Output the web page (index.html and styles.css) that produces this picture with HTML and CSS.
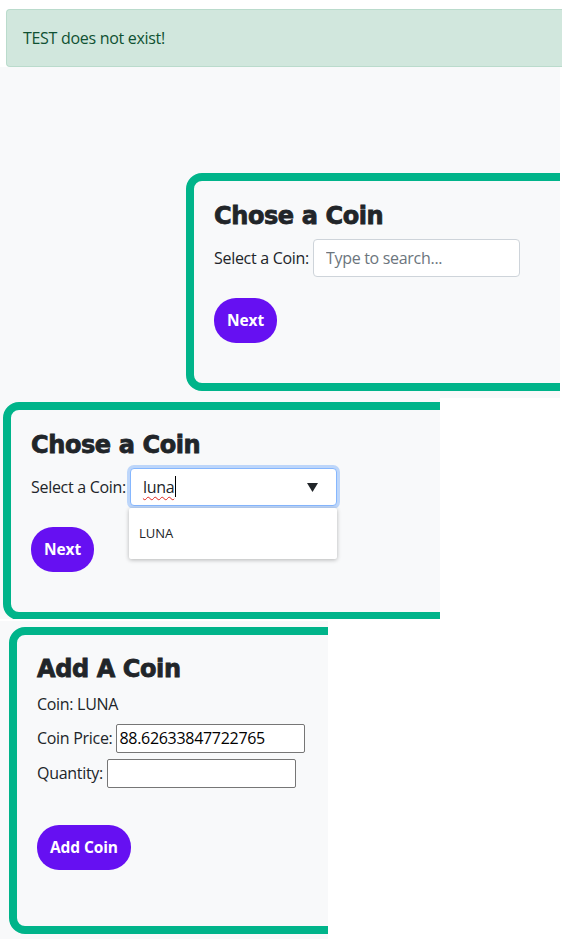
FILE: index.html
```html
<!DOCTYPE html>
<html lang="en">
<head>
<meta charset="utf-8">
<title>Coins</title>
<link rel="stylesheet" href="styles.css">
</head>
<body>
<div class="page">
  <section class="shot shot-1">
    <div class="alert-wrap">
      <div class="alert">TEST does not exist!</div>
    </div>
    <div class="shot-1-body">
      <div class="card card-1">
        <h2 class="card-title">Chose a Coin</h2>
        <div class="field-row">
          <label class="field-label">Select a Coin:</label>
          <input class="search-input" type="text" placeholder="Type to search...">
        </div>
        <button class="btn" type="button">Next</button>
      </div>
    </div>
  </section>

  <section class="shot shot-2">
    <div class="card card-2">
      <h2 class="card-title">Chose a Coin</h2>
      <div class="field-row">
        <label class="field-label">Select a Coin:</label>
        <div class="combo-wrap">
          <div class="combo">
            <span class="typed">luna</span><span class="caret"></span>
            <svg class="combo-arrow" width="11" height="9" viewBox="0 0 11 9"><path d="M0 0H11L5.5 9Z" fill="#212529"/></svg>
          </div>
          <div class="menu">
            <div class="menu-item">LUNA</div>
          </div>
        </div>
      </div>
      <button class="btn" type="button">Next</button>
    </div>
  </section>

  <section class="shot shot-3">
    <div class="card card-3">
      <h2 class="card-title">Add A Coin</h2>
      <p class="coin-line">Coin: LUNA</p>
      <div class="inline-row">
        <label class="field-label">Coin Price:</label>
        <input class="plain-input" type="text" value="88.62633847722765">
      </div>
      <div class="inline-row">
        <label class="field-label">Quantity:</label>
        <input class="plain-input" type="text" value="">
      </div>
      <button class="btn btn-add" type="button">Add Coin</button>
    </div>
  </section>
</div>
</body>
</html>
```

FILE: styles.css
```css
* { box-sizing: border-box; }

html, body {
  margin: 0;
  padding: 0;
  background: #ffffff;
}

body {
  font-family: "Open Sans", "Noto Sans", sans-serif;
  font-size: 16px;
  line-height: 1.5;
  letter-spacing: -0.3px;
  color: #212529;
}

.page {
  display: flex;
  flex-direction: column;
  align-items: flex-start;
}

.shot {
  overflow: hidden;
  background: #f8f9fa;
}

/* ---------- shot 1 ---------- */
.shot-1 {
  width: 562px;
  height: 398px;
  background: #ffffff;
}

.alert-wrap {
  padding: 9px 0 0 6px;
  background: #ffffff;
}

.alert {
  background: #d1e7dd;
  border: 1px solid #badbcc;
  border-right: none;
  border-radius: 4px 0 0 4px;
  color: #0f5132;
  padding: 16px;
  font-size: 16px;
  line-height: 24px;
}

.shot-1-body {
  width: 560px;
  height: 331px;
  background: #f8f9fa;
  padding: 106px 0 0 186px;
  overflow: hidden;
}

/* ---------- cards ---------- */
.card {
  background: #f8f9fa;
  border: 8px solid #00b48a;
  border-radius: 16px;
  padding: 21px 20px 40px;
  display: flex;
  flex-direction: column;
  align-items: flex-start;
  flex-shrink: 0;
}

.card-1 { width: 420px; }

.card-title {
  margin: 0 0 8px;
  font-family: "DejaVu Sans", "Liberation Sans", sans-serif;
  font-weight: 700;
  font-size: 24px;
  line-height: 1.2;
  color: #212529;
  letter-spacing: -0.4px;
  -webkit-text-stroke: 0.8px #212529;
}

.field-row {
  display: flex;
  align-items: center;
  gap: 4px;
  margin-bottom: 21px;
  height: 38px;
}

.field-label {
  font-size: 16px;
  color: #212529;
  white-space: nowrap;
}

.search-input {
  width: 207px;
  height: 38px;
  border: 1px solid #ced4da;
  border-radius: 4px;
  padding: 0 12px;
  font-family: inherit;
  font-size: 16px;
  letter-spacing: -0.3px;
  color: #212529;
  background: #ffffff;
  outline: none;
}

.search-input::placeholder {
  color: #6c757d;
  opacity: 1;
}

.btn {
  height: 45px;
  border: 0;
  border-radius: 22px;
  background: #6610f2;
  color: #ffffff;
  font-family: "Open Sans", "Noto Sans", sans-serif;
  font-weight: 700;
  font-size: 15.5px;
  letter-spacing: -0.1px;
  padding: 0 13px;
  cursor: pointer;
}

/* ---------- shot 2 ---------- */
.shot-2 {
  width: 440px;
  height: 221px;
  padding: 4px 0 0 3px;
  margin-bottom: 2px;
}

.card-2 { width: 460px; }

.combo-wrap {
  position: relative;
}

.combo {
  width: 207px;
  height: 38px;
  border: 1px solid #86b7fe;
  border-radius: 4px;
  box-shadow: 0 0 0 3px rgba(13, 110, 253, 0.25);
  background: #ffffff;
  padding: 0 12px;
  display: flex;
  align-items: center;
}

.typed {
  font-size: 16px;
  color: #212529;
  text-decoration: underline wavy #e0261d;
  text-decoration-thickness: 1px;
  text-underline-offset: 3px;
}

.caret {
  width: 1px;
  height: 21px;
  background: #000000;
  margin-left: 1px;
}

.combo-arrow {
  margin-left: auto;
  margin-right: 6px;
  margin-top: 2px;
}

.menu {
  position: absolute;
  top: calc(100% + 2px);
  left: -1px;
  width: 208px;
  height: 51px;
  background: #ffffff;
  border-radius: 2px;
  box-shadow: 0 1px 4px rgba(0, 0, 0, 0.28);
  display: flex;
  align-items: center;
  z-index: 2;
}

.menu-item {
  padding-left: 10px;
  font-size: 13px;
  letter-spacing: 0;
  color: #212529;
}

/* ---------- shot 3 ---------- */
.shot-3 {
  width: 328px;
  height: 318px;
  padding: 6px 0 0 9px;
}

.card-3 {
  width: 340px;
  padding: 20px 20px 56px;
}

.coin-line {
  margin: 0 0 8px;
  line-height: 24px;
}

.inline-row {
  display: flex;
  align-items: center;
  gap: 4px;
  height: 29px;
  margin-bottom: 6px;
}

.plain-input {
  width: 189px;
  height: 29px;
  border: 1px solid #767676;
  border-radius: 2px;
  padding: 1px 2px;
  font-family: inherit;
  font-size: 16px;
  letter-spacing: -0.3px;
  color: #000000;
  background: #ffffff;
}

.btn-add {
  margin-top: 31px;
}
```
